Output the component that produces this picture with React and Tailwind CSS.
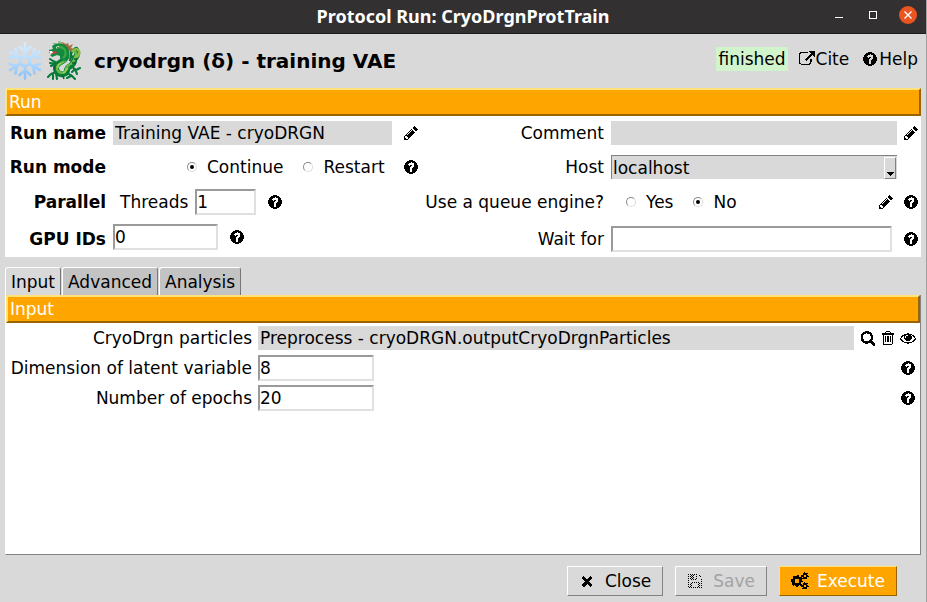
const PATHS = {
  help: "M1024 1376v-192q0-14-9-23t-23-9h-192q-14 0-23 9t-9 23v192q0 14 9 23t23 9h192q14 0 23-9t9-23zm256-672q0-88-55.5-163t-138.5-116-170-41q-243 0-371 213-15 24 8 42l132 100q7 6 19 6 16 0 25-12 53-68 86-92 34-24 86-24 48 0 85.5 26t37.5 59q0 38-20 61t-68 45q-63 28-115.5 86.5t-52.5 125.5v36q0 14 9 23t23 9h192q14 0 23-9t9-23q0-19 21.5-49.5t54.5-49.5q32-18 49-28.5t46-35 44.5-48 28-60.5 12.5-81zm384 192q0 209-103 385.5t-279.5 279.5-385.5 103-385.5-103-279.5-279.5-103-385.5 103-385.5 279.5-279.5 385.5-103 385.5 103 279.5 279.5 103 385.5z",
  pencil: "M491 1536l91-91-235-235-91 91v107h128v128h107zm523-928q0-22-22-22-10 0-17 7l-542 542q-7 7-7 17 0 22 22 22 10 0 17-7l542-542q7-7 7-17zm-54-192l416 416-832 832h-416v-416zm683 96q0 53-37 90l-166 166-416-416 166-165q36-38 90-38 53 0 91 38l235 234q37 39 37 91z",
  link: "M1408 928v320q0 119-84.5 203.5t-203.5 84.5h-832q-119 0-203.5-84.5t-84.5-203.5v-832q0-119 84.5-203.5t203.5-84.5h704q14 0 23 9t9 23v64q0 14-9 23t-23 9h-704q-66 0-113 47t-47 113v832q0 66 47 113t113 47h832q66 0 113-47t47-113v-320q0-14 9-23t23-9h64q14 0 23 9t9 23zm384-864v512q0 26-19 45t-45 19-45-19l-176-176-652 652q-10 10-23 10t-23-10l-114-114q-10-10-10-23t10-23l652-652-176-176q-19-19-19-45t19-45 45-19h512q26 0 45 19t19 45z",
  search: "M1216 832q0-185-131.5-316.5t-316.5-131.5-316.5 131.5-131.5 316.5 131.5 316.5 316.5 131.5 316.5-131.5 131.5-316.5zm512 832q0 52-38 90t-90 38q-54 0-90-38l-343-342q-179 124-399 124-143 0-273.5-55.5t-225-150-150-225-55.5-273.5 55.5-273.5 150-225 225-150 273.5-55.5 273.5 55.5 225 150 150 225 55.5 273.5q0 220-124 399l343 343q37 37 37 90z",
  trash: "M704 736v576q0 14-9 23t-23 9h-64q-14 0-23-9t-9-23v-576q0-14 9-23t23-9h64q14 0 23 9t9 23zm256 0v576q0 14-9 23t-23 9h-64q-14 0-23-9t-9-23v-576q0-14 9-23t23-9h64q14 0 23 9t9 23zm256 0v576q0 14-9 23t-23 9h-64q-14 0-23-9t-9-23v-576q0-14 9-23t23-9h64q14 0 23 9t9 23zm128 724v-948h-896v948q0 22 7 40.5t14.5 27 10.5 8.5h832q3 0 10.5-8.5t14.5-27 7-40.5zm-672-1076h448l-48-117q-7-9-17-11h-317q-10 2-17 11zm928 32v64q0 14-9 23t-23 9h-96v948q0 83-47 143.5t-113 60.5h-832q-66 0-113-58.5t-47-141.5v-952h-96q-14 0-23-9t-9-23v-64q0-14 9-23t23-9h309l70-167q15-37 54-63t79-26h320q40 0 79 26t54 63l70 167h309q14 0 23 9t9 23z",
  eye: "M1664 960q-152-236-381-353 61 104 61 225 0 185-131.5 316.5t-316.5 131.5-316.5-131.5-131.5-316.5q0-121 61-225-229 117-381 353 133 205 333.5 326.5t434.5 121.5 434.5-121.5 333.5-326.5zm-720-384q0-20-14-34t-34-14q-125 0-214.5 89.5t-89.5 214.5q0 20 14 34t34 14 34-14 14-34q0-86 61-147t147-61q20 0 34-14t14-34zm848 384q0 34-20 69-140 230-376.5 368.5t-499.5 138.5-499.5-139-376.5-368q-20-35-20-69t20-69q140-229 376.5-368t499.5-139 499.5 139 376.5 368q20 35 20 69z",
  times: "M1490 1322q0 40-28 68l-136 136q-28 28-68 28t-68-28l-294-294-294 294q-28 28-68 28t-68-28l-136-136q-28-28-28-68t28-68l294-294-294-294q-28-28-28-68t28-68l136-136q28-28 68-28t68 28l294 294 294-294q28-28 68-28t68 28l136 136q28 28 28 68t-28 68l-294 294 294 294q28 28 28 68z",
  save: "M512 1536h768v-384h-768v384zm896 0h128v-896q0-14-10-38.5t-20-34.5l-281-281q-10-10-34-20t-39-10v416q0 40-28 68t-68 28h-576q-40 0-68-28t-28-68v-416h-128v1280h128v-416q0-40 28-68t68-28h832q40 0 68 28t28 68v416zm-384-928v-320q0-13-9.5-22.5t-22.5-9.5h-192q-13 0-22.5 9.5t-9.5 22.5v320q0 13 9.5 22.5t22.5 9.5h192q13 0 22.5-9.5t9.5-22.5zm640 32v928q0 40-28 68t-68 28h-1344q-40 0-68-28t-28-68v-1344q0-40 28-68t68-28h928q40 0 88 20t76 48l280 280q28 28 48 76t20 88z",
};

function Icon({ name, className = "size-4" }) {
  return (
    <svg viewBox="0 0 1792 1792" shapeRendering="crispEdges" className={`shrink-0 fill-current ${className}`} aria-hidden="true">
      <path d={PATHS[name]} />
    </svg>
  );
}

function Gears() {
  return (
    <svg viewBox="0 0 18 18" shapeRendering="crispEdges" className="size-[18px] shrink-0" fill="none" stroke="black" aria-hidden="true">
      <circle cx="6" cy="9" r="3.500" strokeWidth="2.600" />
      <circle cx="6" cy="9" r="5.300" strokeWidth="1.500" strokeDasharray="2.200 1.960" strokeDashoffset="1.100" />
      <circle cx="14" cy="4" r="2" strokeWidth="1.600" />
      <circle cx="14" cy="4" r="3.100" strokeWidth="1.200" strokeDasharray="1.600 1.650" strokeDashoffset="0.800" />
      <circle cx="14" cy="14" r="2" strokeWidth="1.600" />
      <circle cx="14" cy="14" r="3.100" strokeWidth="1.200" strokeDasharray="1.600 1.650" strokeDashoffset="0.800" />
    </svg>
  );
}

function StippledSave() {
  return (
    <svg viewBox="0 0 16 16" shapeRendering="crispEdges" className="size-4 shrink-0" aria-hidden="true">
      <defs>
        <pattern id="stipple" width="2" height="2" patternUnits="userSpaceOnUse">
          <rect width="1" height="1" fill="white" />
          <rect x="1" y="1" width="1" height="1" fill="white" />
        </pattern>
        <mask id="stipple-mask">
          <rect width="16" height="16" fill="url(#stipple)" />
        </mask>
      </defs>
      <g mask="url(#stipple-mask)">
        <path d={PATHS.save} transform="scale(0.00893)" />
      </g>
    </svg>
  );
}

function IconButton({ name, label }) {
  return (
    <button type="button" aria-label={label} className="flex shrink-0">
      <Icon name={name} />
    </button>
  );
}

function Radio({ name, label, checked }) {
  return (
    <label className="flex items-center gap-[10px]">
      <span className="grid place-items-center">
        <input
          type="radio"
          name={name}
          defaultChecked={checked}
          className="peer col-start-1 row-start-1 size-[10px] appearance-none rounded-full border border-t-[#8a8a8a] border-r-[#dcdcdc] border-b-[#dcdcdc] border-l-[#8a8a8a]"
        />
        <span className="pointer-events-none col-start-1 row-start-1 hidden size-1 rounded-full bg-black peer-checked:block" />
      </span>
      {label}
    </label>
  );
}

const ENTRY =
  "h-[26px] min-w-0 border-2 border-t-[#9a9a9a] border-l-[#9a9a9a] border-r-[#e0e0e0] border-b-[#e0e0e0] bg-white outline-none";
const FLAT = "h-6 min-w-0 bg-[#d9d9d9] px-[2px] outline-none";
const BAR =
  "flex h-7 items-center border-t-2 border-r-2 border-b-2 border-l-2 border-t-[#ffe27a] border-l-[#ffe27a] border-r-[#996300] border-b-[#996300] bg-[#ffa500] px-[2px] font-normal text-white";
const BUTTON =
  "flex h-[30px] items-center gap-[10px] border border-t-white border-l-white border-r-[#828282] border-b-[#828282] px-[11px]";

function Snowflake() {
  return (
    <svg viewBox="0 0 36 40" className="h-10 w-9" aria-hidden="true">
      <defs>
        <linearGradient id="ice" gradientUnits="userSpaceOnUse" x1="0" y1="0" x2="0" y2="40">
          <stop offset="0" stopColor="#dcefff" />
          <stop offset="0.5" stopColor="#b5dbff" />
          <stop offset="1" stopColor="#82bdf5" />
        </linearGradient>
      </defs>
      <g stroke="url(#ice)" strokeWidth="2.600" strokeLinecap="round" fill="none">
        <path d="M18 2.500L18.010 15M18 25L18.010 37.500M12.500 6L18 11L23.500 6M12.500 34L18 29L23.500 34" />
        <path d="M3 11L13.500 17M22.500 23L33 29M3 29L13.500 23M22.500 17L33 11" />
        <path d="M8.500 7.500L10 15L2.500 17M27.500 7.500L26 15L33.500 17M8.500 32.500L10 25L2.500 23M27.500 32.500L26 25L33.500 23" />
        <path d="M18 14.500L22.800 17.200V22.800L18 25.500L13.200 22.800V17.200Z" strokeWidth="3" />
      </g>
    </svg>
  );
}

function Dragon() {
  return (
    <svg viewBox="0 0 34 40" className="h-10 w-[34px]" aria-hidden="true">
      <path d="M13 8Q9 1 6 3M16 7Q15 0 11 1" fill="none" stroke="#79ad70" strokeWidth="1.200" />
      <path d="M20 8L16 5L15 1L19 3L21 2L22 5L26 3L24 7L27 8L24 11Z" fill="#a86b42" />
      <path d="M23 10L26 11L25 14L28 16L24 18L26 21L22 20Z" fill="#08753b" />
      <path d="M19 15C20 21 9 20 9 27C9 35 20 35 20 29C20 25 26 26 27 20C27 16 33 15 29 9" fill="none" stroke="#087c38" strokeWidth="6" strokeLinecap="round" />
      <path d="M18 18C19 22 9 22 10 28C11 33 19 33 19 28C19 24 26 24 27 19C28 15 31 14 28 10" fill="none" stroke="#64ba4b" strokeWidth="2.500" strokeLinecap="round" />
      <path d="M26 10Q30 6 32 10Q33 14 29 16" fill="none" stroke="#8abd48" strokeWidth="2.600" strokeLinecap="round" />
      <path d="M5 5Q11 0 18 4Q24 8 22 16L18 20Q12 20 13 15L10 14L5 16L3 14L7 12L2 12L2 9L6 8Z" fill="#118a3e" />
      <path d="M9 7Q14 4 18 9Q20 14 16 17" fill="none" stroke="#40aa3f" strokeWidth="2" />
      <path d="M3 11L9 10L10 12L5 13Z" fill="#d9354b" />
      <path d="M2 10L5 10L6 12L3 12Z" fill="#fff" />
      <path d="M9 6L12 5L12 8L10 8Z" fill="#fff" />
      <circle cx="11" cy="7" r="0.900" fill="#07351c" />
      <path d="M10 22L6 20L3 18M8 23L3 22M9 22L4 25M9 31L4 33L1 36M6 33L6 38M9 32L10 38M20 31L24 35L20 37M24 34L28 38M24 25L29 29L33 27M28 28L30 33M28 28L25 31" fill="none" stroke="#087b3b" strokeWidth="2.100" strokeLinecap="round" strokeLinejoin="round" />
      <path d="M14 22L11 24L11 27M21 27L18 31L16 32" fill="none" stroke="#a1d457" strokeWidth="1.300" />
      <path d="M8 25L7 29M27 18L30 18M25 22L29 22M16 35L17 38" stroke="#08602e" strokeWidth="1.500" />
    </svg>
  );
}

export default function App() {
  return (
    <div className="flex min-h-screen flex-col border-r border-[#a0a0a0] bg-[#d9d9d9] font-['DejaVu_Sans',sans-serif] text-[17px] leading-6 text-black">
      <div className="grid h-[34px] shrink-0 grid-cols-[1fr_auto_1fr] items-center border-b border-[#1d1b1b] bg-[#333031] text-white">
        <h1 className="col-start-2 mb-[2px] font-['Noto_Sans',sans-serif] text-[18px] font-bold">Protocol Run: CryoDrgnProtTrain</h1>
        <div className="mb-[3px] flex items-center justify-end gap-[18px] pr-[9px]">
          <button type="button" aria-label="Minimize" className="flex size-4 items-center justify-center pt-1">
            <span className="h-px w-2 bg-white" />
          </button>
          <button type="button" aria-label="Maximize" className="flex size-4 items-center justify-center">
            <span className="size-2 border border-white" />
          </button>
          <button type="button" aria-label="Close window" className="flex size-[18px] items-center justify-center rounded-full bg-[#e95420]">
            <svg viewBox="0 0 8 8" className="size-2" aria-hidden="true">
              <path d="M0.500 0.500L7.500 7.500M7.500 0.500L0.500 7.500" stroke="white" strokeWidth="1.400" />
            </svg>
          </button>
        </div>
      </div>

      <header className="flex h-[54px] shrink-0 items-center pr-2 pl-[7px]">
        <Snowflake />
        <span className="ml-1 flex"><Dragon /></span>
        <h2 className="ml-[13px] flex-1 text-[20px] font-bold">cryodrgn (δ) - training VAE</h2>
        <div className="mb-1 flex items-center">
          <span className="bg-[#d2f4cc] px-[2px]">finished</span>
          <a href="#cite" className="ml-[11px] flex items-center gap-px"><Icon name="link" />Cite</a>
          <a href="#help" className="ml-[13px] flex items-center gap-px"><Icon name="help" />Help</a>
        </div>
      </header>

      <section className="mx-[5px] bg-white">
        <h3 className={BAR}>Run</h3>
        <div className="grid grid-cols-[416px_1fr]">
          <div className="grid grid-cols-[101px_1fr] grid-rows-[34px_34px_36px_37px] items-center gap-x-[7px]">
            <label htmlFor="run-name" className="text-right font-bold">Run name</label>
            <div className="flex items-center gap-[11px]">
              <input id="run-name" defaultValue="Training VAE - cryoDRGN" className={`w-[279px] ${FLAT}`} />
              <IconButton name="pencil" label="Edit run name" />
            </div>
            <span className="text-right font-bold">Run mode</span>
            <div className="flex items-center pl-[74px]">
              <Radio name="mode" label="Continue" checked />
              <span className="ml-5 flex"><Radio name="mode" label="Restart" /></span>
              <span className="ml-[18px] flex"><IconButton name="help" label="Run mode help" /></span>
            </div>
            <span className="text-right font-bold">Parallel</span>
            <div className="flex items-center pl-[7px]">
              <label htmlFor="threads">Threads</label>
              <input id="threads" defaultValue="1" className={`mr-[11px] ml-[7px] w-[61px] ${ENTRY}`} />
              <IconButton name="help" label="Threads help" />
            </div>
            <label htmlFor="gpu" className="text-right font-bold">GPU IDs</label>
            <div className="flex items-center gap-[11px] pb-[3px]">
              <input id="gpu" defaultValue="0" className={`w-[105px] ${ENTRY}`} />
              <IconButton name="help" label="GPU help" />
            </div>
          </div>

          <div className="grid grid-cols-[183px_1fr] grid-rows-[34px_34px_36px_37px] items-center gap-x-[7px] pr-[2px]">
            <label htmlFor="comment" className="text-right">Comment</label>
            <div className="flex items-center gap-[6px]">
              <input id="comment" className={`flex-1 ${FLAT}`} />
              <IconButton name="pencil" label="Edit comment" />
            </div>
            <label htmlFor="host" className="text-right">Host</label>
            <div className="relative mr-[22px]">
              <select id="host" className="block h-6 w-full appearance-none border-t border-l border-[#828282] bg-[#d9d9d9] px-px outline-none">
                <option>localhost</option>
              </select>
              <span className="pointer-events-none absolute top-[2px] right-px bottom-0 flex w-3 items-end justify-center border border-t-white border-l-white border-r-[#828282] border-b-[#828282] bg-[#d9d9d9] pb-[2px]">
                <svg viewBox="0 0 7 4" shapeRendering="crispEdges" className="h-1 w-[7px]" aria-hidden="true"><path d="M0 0H7L3.500 4Z" /></svg>
              </span>
            </div>
            <span className="text-right">Use a queue engine?</span>
            <div className="flex items-center pl-[15px]">
              <Radio name="queue" label="Yes" />
              <span className="ml-5 flex flex-1"><Radio name="queue" label="No" checked /></span>
              <span className="flex gap-[9px]">
                <IconButton name="pencil" label="Edit queue" />
                <IconButton name="help" label="Queue help" />
              </span>
            </div>
            <label htmlFor="wait" className="text-right">Wait for</label>
            <div className="flex items-center gap-[11px]">
              <input id="wait" className={`flex-1 ${ENTRY}`} />
              <IconButton name="help" label="Wait for help" />
            </div>
          </div>
        </div>
      </section>

      <div role="tablist" className="mt-[10px] ml-[5px] flex gap-px">
        <button type="button" role="tab" aria-selected="true" className="h-7 rounded-t-[3px] border-t border-r border-l border-t-white border-r-[#777] border-l-white px-[5px]">Input</button>
        <button type="button" role="tab" aria-selected="false" className="h-7 rounded-t-[3px] border-t border-r border-l border-t-white border-r-[#777] border-l-white bg-[#c3c3c3] px-[5px]">Advanced</button>
        <button type="button" role="tab" aria-selected="false" className="h-7 rounded-t-[3px] border-t border-r border-l border-t-white border-r-[#777] border-l-white bg-[#c3c3c3] px-[5px]">Analysis</button>
      </div>

      <section className="mx-[5px] flex-1 border-r border-b border-l border-r-[#828282] border-b-[#828282] border-l-white bg-white">
        <h3 className={BAR}>Input</h3>
        <div className="grid auto-rows-[30px] grid-cols-[246px_1fr] items-center gap-x-[6px] pr-1">
          <label htmlFor="particles" className="text-right">CryoDrgn particles</label>
          <div className="flex items-center">
            <input id="particles" defaultValue="Preprocess - cryoDRGN.outputCryoDrgnParticles" className={`mr-[6px] flex-1 ${FLAT}`} />
            <span className="flex gap-1">
              <IconButton name="search" label="Search particles" />
              <IconButton name="trash" label="Remove particles" />
              <IconButton name="eye" label="View particles" />
            </span>
          </div>
          <label htmlFor="dimension" className="text-right">Dimension of latent variable</label>
          <div className="flex items-center justify-between">
            <input id="dimension" defaultValue="8" className={`w-[116px] ${ENTRY}`} />
            <IconButton name="help" label="Dimension help" />
          </div>
          <label htmlFor="epochs" className="text-right">Number of epochs</label>
          <div className="flex items-center justify-between">
            <input id="epochs" defaultValue="20" className={`w-[116px] ${ENTRY}`} />
            <IconButton name="help" label="Epochs help" />
          </div>
        </div>
      </section>

      <footer className="flex h-[47px] shrink-0 items-start justify-end gap-3 pt-[11px] pr-[29px]">
        <button type="button" className={BUTTON}><Icon name="times" />Close</button>
        <button type="button" disabled className={`${BUTTON} text-[#a3a3a3]`}>
          <StippledSave />Save
        </button>
        <button type="button" className="flex h-[30px] items-center gap-2 border border-t-[#ffe27a] border-r-[#996300] border-b-[#996300] border-l-[#ffe27a] bg-[#ffa500] px-[11px] text-white">
          <Gears />Execute
        </button>
      </footer>
    </div>
  );
}
